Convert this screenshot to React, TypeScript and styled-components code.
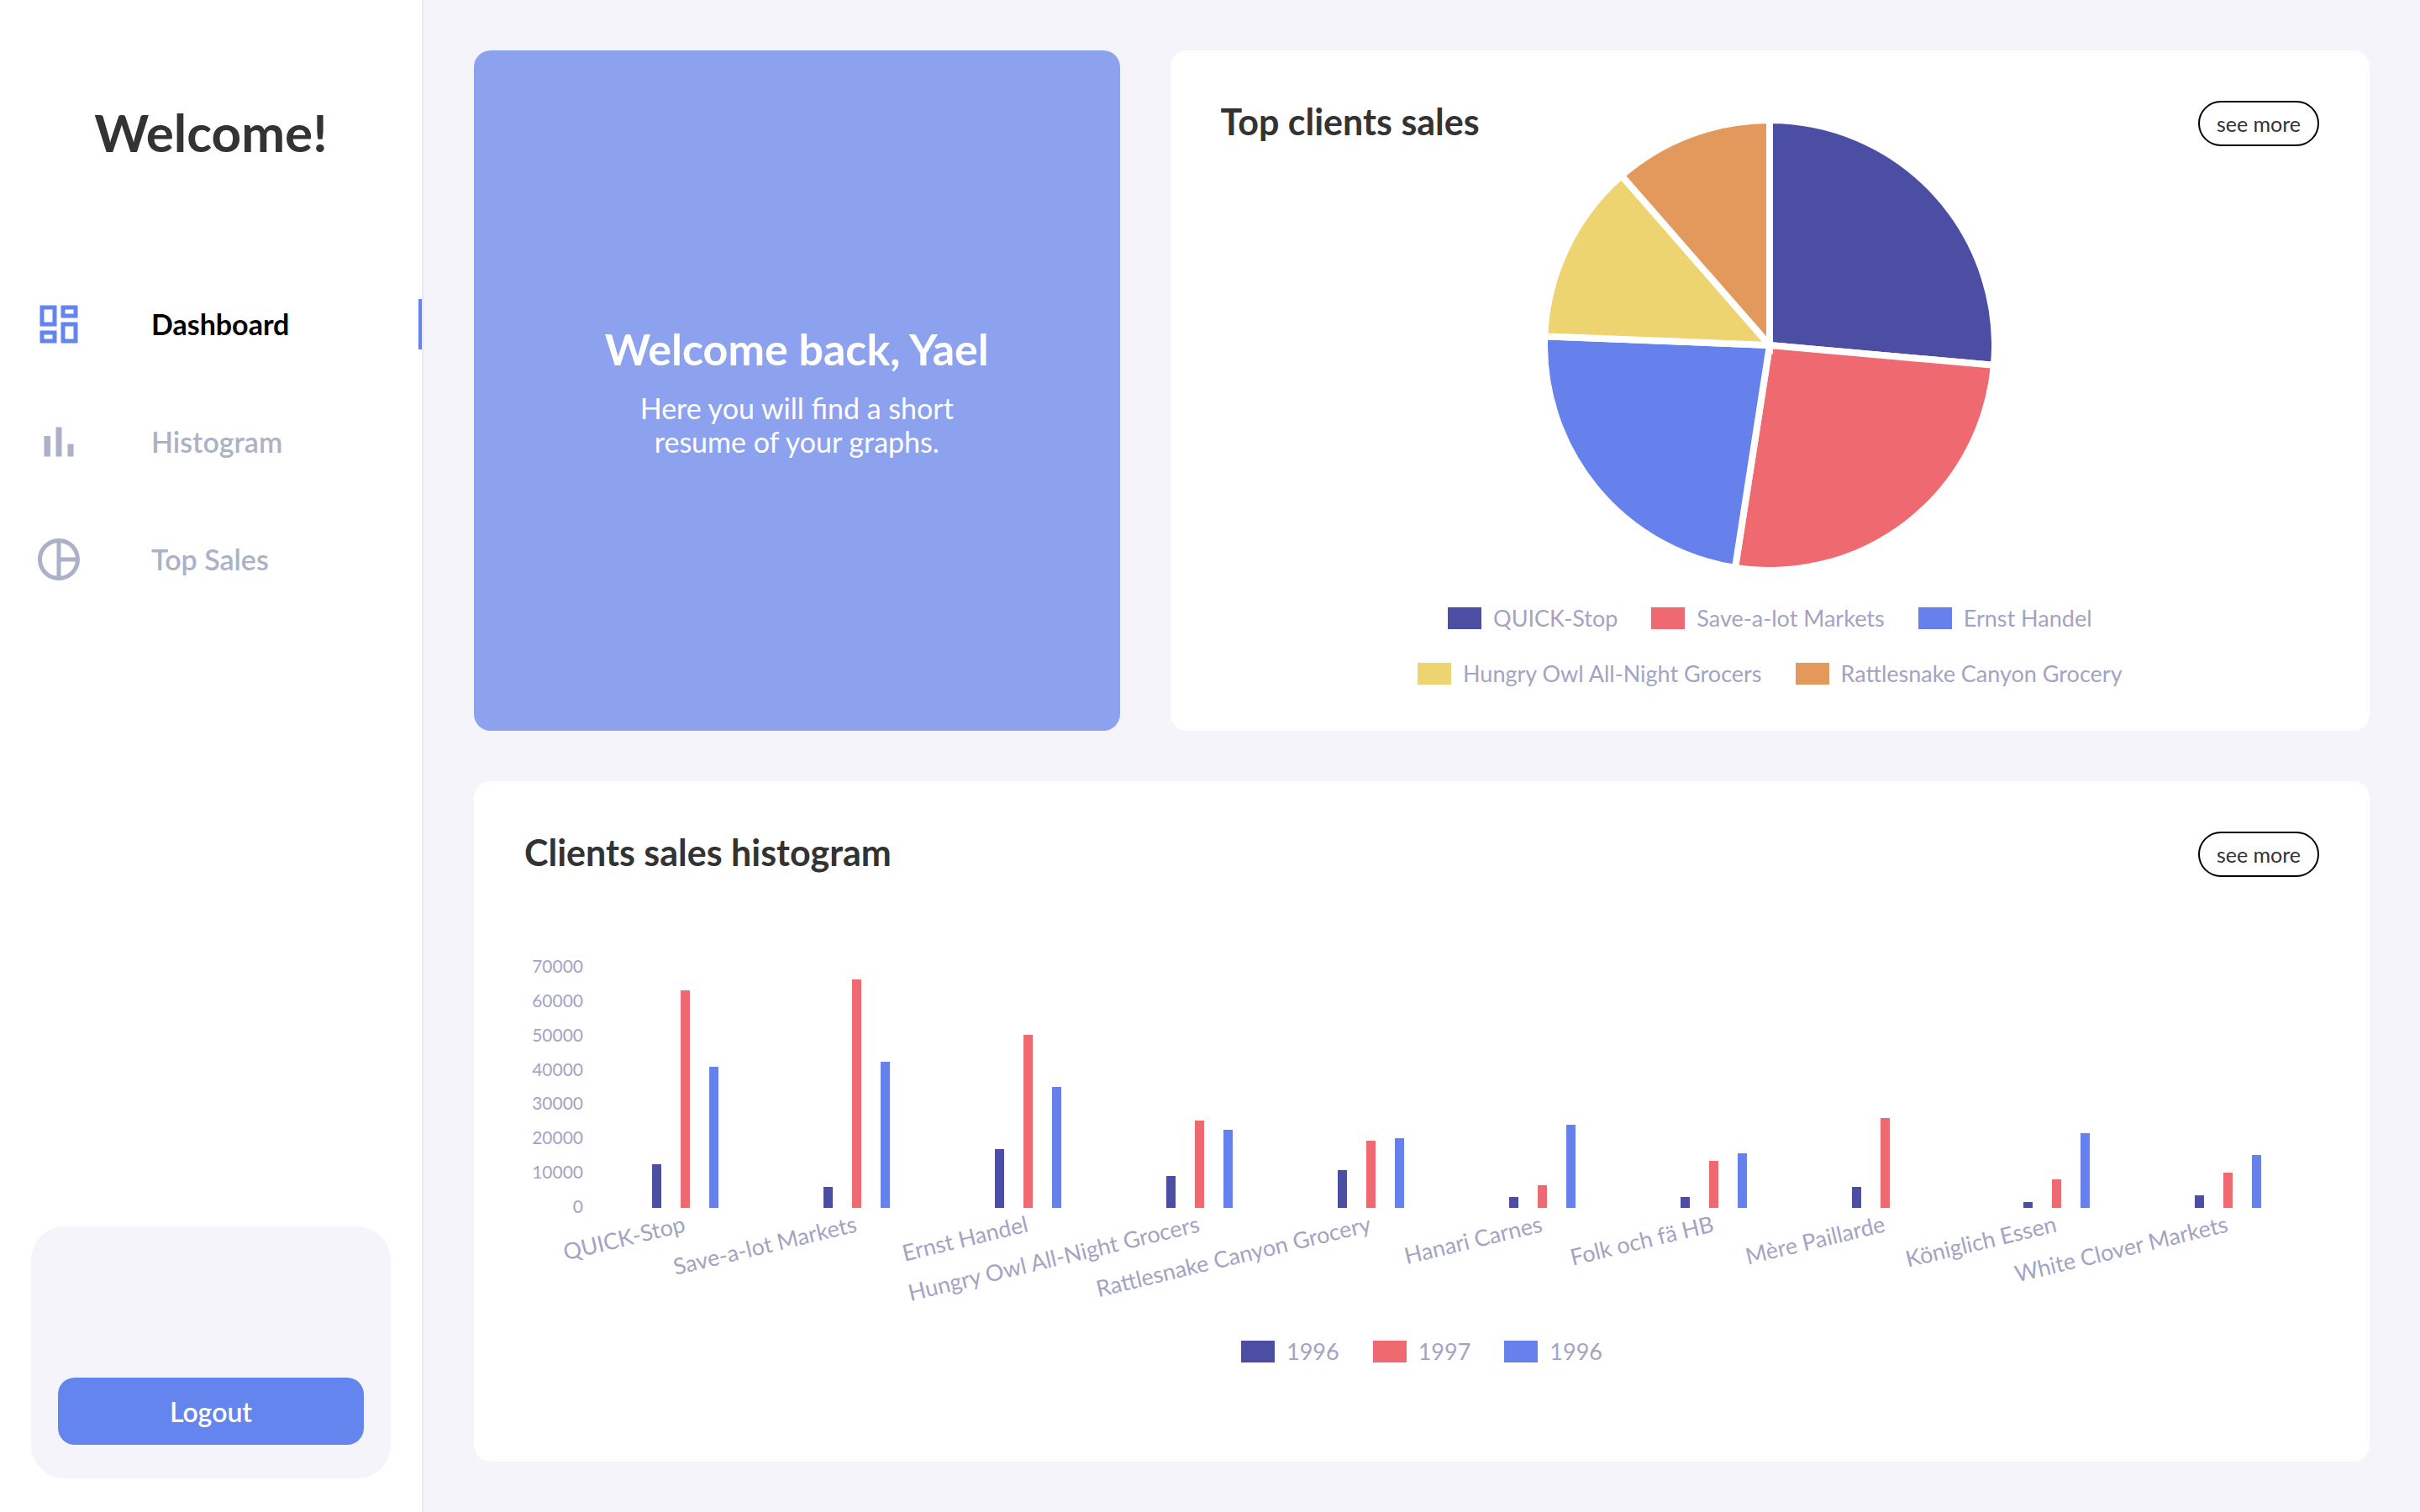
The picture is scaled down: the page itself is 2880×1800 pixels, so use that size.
import React from 'react';
import styled, { createGlobalStyle } from 'styled-components';

const colors = {
  page: '#f5f4fa',
  surface: '#ffffff',
  divider: '#e9e8f0',
  primary: '#6484ee',
  hero: '#8da2ef',
  heading: '#333333',
  navText: '#abb2c8',
  chartText: '#a3a3c4',
};

const palette = {
  indigo: '#4c4ea4',
  coral: '#ee6a70',
  blue: '#6681ec',
  yellow: '#eed371',
  orange: '#e2995b',
};

const GlobalStyle = createGlobalStyle`
  *, *::before, *::after { box-sizing: border-box; }
  body {
    margin: 0;
    background: ${colors.page};
    font-family: Lato, "Open Sans", sans-serif;
  }
  h1, h2, p, ul { margin: 0; padding: 0; }
  ul { list-style: none; }
`;

/* ---------- layout ---------- */

const Layout = styled.div`
  display: flex;
  min-height: 100vh;
`;

const Sidebar = styled.aside`
  display: flex;
  flex-direction: column;
  flex: 0 0 504px;
  padding: 120px 0 40px;
  background: ${colors.surface};
  border-right: 2px solid ${colors.divider};
`;

const Brand = styled.h1`
  color: ${colors.heading};
  font-size: 62px;
  font-weight: 700;
  line-height: 74px;
  text-align: center;
`;

const Nav = styled.nav`
  margin-top: 162px;
`;

const NavList = styled.ul`
  display: flex;
  flex-direction: column;
  gap: 80px;
`;

const NavLink = styled.a<{ $active?: boolean }>`
  display: flex;
  align-items: center;
  gap: 80px;
  height: 60px;
  padding-left: 40px;
  border-right: 4px solid ${p => (p.$active ? colors.primary : 'transparent')};
  color: ${p => (p.$active ? '#000000' : colors.navText)};
  font-size: 34px;
  font-weight: ${p => (p.$active ? 700 : 600)};
  line-height: 40px;
  text-decoration: none;

  svg {
    width: 60px;
    height: 60px;
    fill: ${p => (p.$active ? colors.primary : colors.navText)};
  }
`;

const AccountBox = styled.div`
  display: flex;
  flex-direction: column;
  justify-content: flex-end;
  height: 300px;
  margin: auto 37px 0;
  padding: 0 32px 40px;
  background: ${colors.page};
  border-radius: 40px;
`;

const LogoutButton = styled.button`
  height: 80px;
  border: 0;
  border-radius: 20px;
  background: ${colors.primary};
  color: #ffffff;
  font-family: inherit;
  font-size: 32px;
  font-weight: 600;
  cursor: pointer;
`;

const Main = styled.main`
  display: grid;
  flex: 1;
  grid-template-columns: 35fr 65fr;
  grid-template-rows: 1fr 1fr;
  gap: 60px;
  min-width: 0;
  padding: 60px;
`;

/* ---------- cards ---------- */

const HeroCard = styled.section`
  display: flex;
  flex-direction: column;
  align-items: center;
  justify-content: center;
  gap: 20px;
  border-radius: 20px;
  background: ${colors.hero};
  color: #ffffff;
  text-align: center;
`;

const HeroTitle = styled.h2`
  font-size: 52px;
  font-weight: 700;
  line-height: 62px;
`;

const HeroText = styled.p`
  max-width: 420px;
  font-size: 34px;
  font-weight: 400;
  line-height: 40px;
`;

const Card = styled.section<{ $wide?: boolean }>`
  display: grid;
  grid-column: ${p => (p.$wide ? '1 / -1' : 'auto')};
  align-items: start;
  align-content: start;
  min-width: 0;
  padding: 60px 60px 40px;
  border-radius: 20px;
  background: ${colors.surface};
`;

const CardHeader = styled.header`
  display: flex;
  grid-area: 1 / 1;
  align-items: flex-start;
  justify-content: space-between;
`;

const CardTitle = styled.h2`
  color: ${colors.heading};
  font-size: 43px;
  font-weight: 700;
  line-height: 50px;
`;

const SeeMore = styled.button`
  width: 144px;
  height: 54px;
  padding: 0;
  border: 2px solid #000000;
  border-radius: 27px;
  background: transparent;
  color: ${colors.heading};
  font-family: inherit;
  font-size: 25px;
  cursor: pointer;
`;

/* The pie shares the header's grid cell, the histogram sits in the row below it. */
const PieBody = styled.div`
  display: flex;
  grid-area: 1 / 1;
  flex-direction: column;
  align-items: center;
  gap: 48px;
  padding-top: 27px;
  pointer-events: none;
`;

const HistogramBody = styled.div`
  display: flex;
  flex-direction: column;
  align-items: center;
  gap: 36px;
  padding-top: 76px;
`;

const PieSvg = styled.svg`
  width: 528px;
  height: 528px;
`;

const BarSvg = styled.svg`
  width: 100%;
  height: auto;
  overflow: visible;
`;

const TickText = styled.text`
  fill: ${colors.chartText};
  font-size: 21px;
  text-anchor: end;
`;

const CategoryText = styled.text`
  fill: ${colors.chartText};
  font-size: 27px;
  text-anchor: end;
`;

const LegendList = styled.ul`
  display: flex;
  flex-wrap: wrap;
  justify-content: center;
  gap: 40px;
  max-width: 900px;
  color: ${colors.chartText};
  font-size: 27px;
  line-height: 26px;
`;

const LegendItem = styled.li`
  display: flex;
  align-items: center;
  gap: 14px;
`;

const Swatch = styled.span<{ $color: string }>`
  width: 40px;
  height: 26px;
  background: ${p => p.$color};
`;

/* ---------- data ---------- */

const topClients = [
  { name: 'QUICK-Stop', share: 95.1, color: palette.indigo },
  { name: 'Save-a-lot Markets', share: 93.7, color: palette.coral },
  { name: 'Ernst Handel', share: 83.5, color: palette.blue },
  { name: 'Hungry Owl All-Night Grocers', share: 46.6, color: palette.yellow },
  { name: 'Rattlesnake Canyon Grocery', share: 41.1, color: palette.orange },
];

const years = [
  { name: '1996', color: palette.indigo },
  { name: '1997', color: palette.coral },
  { name: '1996', color: palette.blue },
];

const clientSales: { name: string; sales: number[] }[] = [
  { name: 'QUICK-Stop', sales: [12700, 63400, 41200] },
  { name: 'Save-a-lot Markets', sales: [6200, 66600, 42700] },
  { name: 'Ernst Handel', sales: [17200, 50500, 35300] },
  { name: 'Hungry Owl All-Night Grocers', sales: [9200, 25400, 22800] },
  { name: 'Rattlesnake Canyon Grocery', sales: [10900, 19700, 20400] },
  { name: 'Hanari Carnes', sales: [3300, 6600, 24300] },
  { name: 'Folk och fä HB', sales: [3100, 13600, 16000] },
  { name: 'Mère Paillarde', sales: [6200, 26100, 0] },
  { name: 'Königlich Essen', sales: [1700, 8300, 21900] },
  { name: 'White Clover Markets', sales: [3600, 10400, 15400] },
];

/* ---------- charts ---------- */

function Legend({ items }: { items: { name: string; color: string }[] }) {
  return (
    <LegendList>
      {items.map((item, i) => (
        <LegendItem key={i}>
          <Swatch $color={item.color} />
          {item.name}
        </LegendItem>
      ))}
    </LegendList>
  );
}

const PIE_RADIUS = 268;

function pointOnPie(degrees: number) {
  const a = (degrees * Math.PI) / 180;
  return `${(PIE_RADIUS * Math.sin(a)).toFixed(2)} ${(-PIE_RADIUS * Math.cos(a)).toFixed(2)}`;
}

function PieChart() {
  let start = 0;
  return (
    <PieSvg viewBox="-264 -264 528 528" role="img" aria-label="Top clients sales">
      {topClients.map(({ name, share, color }) => {
        const end = start + share;
        const d = `M0 0 L${pointOnPie(start)} A${PIE_RADIUS} ${PIE_RADIUS} 0 0 1 ${pointOnPie(end)} Z`;
        start = end;
        return <path key={name} d={d} fill={color} stroke="#ffffff" strokeWidth="8" />;
      })}
    </PieSvg>
  );
}

const AXIS_MAX = 70000;
const AXIS_HEIGHT = 286;
const AXIS_BOTTOM = 318;
const AXIS_LEFT = 90;
const GROUP_WIDTH = 204;
const ticks = [70000, 60000, 50000, 40000, 30000, 20000, 10000, 0];
const barOffsets = [-40, -6, 28];

const scale = (value: number) => Math.round((value / AXIS_MAX) * AXIS_HEIGHT);

function BarChart() {
  return (
    <BarSvg viewBox="0 0 2136 440" role="img" aria-label="Clients sales histogram">
      {ticks.map(tick => (
        <TickText key={tick} x={70} y={AXIS_BOTTOM - scale(tick) + 6}>
          {tick}
        </TickText>
      ))}
      {clientSales.map(({ name, sales }, i) => {
        const center = AXIS_LEFT + GROUP_WIDTH * i + GROUP_WIDTH / 2;
        return (
          <g key={name}>
            {sales.map((value, n) => (
              <rect
                key={n}
                x={center + barOffsets[n]}
                y={AXIS_BOTTOM - scale(value)}
                width={11}
                height={scale(value)}
                fill={years[n].color}
              />
            ))}
            <CategoryText transform={`translate(${center + 1} 346) rotate(-13.5)`}>{name}</CategoryText>
          </g>
        );
      })}
    </BarSvg>
  );
}

/* ---------- icons ---------- */

const DashboardIcon = () => (
  <svg viewBox="0 0 24 24" aria-hidden="true">
    <path d="M19 5v2h-4V5h4M9 5v6H5V5h4m10 8v6h-4v-6h4M9 17v2H5v-2h4M21 3h-8v6h8V3zM11 3H3v10h8V3zm10 8h-8v10h8V11zm-10 4H3v6h8v-6z" />
  </svg>
);

const HistogramIcon = () => (
  <svg viewBox="0 0 24 24" aria-hidden="true">
    <path d="M5 9.2h3V19H5V9.2zM10.6 5h2.8v14h-2.8V5zm5.6 8H19v6h-2.8v-6z" />
  </svg>
);

const PieIcon = () => (
  <svg viewBox="0 0 24 24" aria-hidden="true">
    <path d="M12 2C6.48 2 2 6.48 2 12s4.48 10 10 10 10-4.48 10-10S17.52 2 12 2zm1 2.07c3.61.45 6.48 3.33 6.93 6.93H13V4.07zM4 12c0-4.06 3.07-7.44 7-7.93v15.87c-3.93-.5-7-3.88-7-7.94zm9 7.93V13h6.93c-.45 3.61-3.32 6.48-6.93 6.93z" />
  </svg>
);

const navItems = [
  { label: 'Dashboard', Icon: DashboardIcon, active: true },
  { label: 'Histogram', Icon: HistogramIcon, active: false },
  { label: 'Top Sales', Icon: PieIcon, active: false },
];

export default function App() {
  return (
    <>
      <GlobalStyle />
      <Layout>
        <Sidebar>
          <Brand>Welcome!</Brand>
          <Nav>
            <NavList>
              {navItems.map(({ label, Icon, active }) => (
                <li key={label}>
                  <NavLink href="#" $active={active} aria-current={active ? 'page' : undefined}>
                    <Icon />
                    {label}
                  </NavLink>
                </li>
              ))}
            </NavList>
          </Nav>
          <AccountBox>
            <LogoutButton type="button">Logout</LogoutButton>
          </AccountBox>
        </Sidebar>
        <Main>
          <HeroCard>
            <HeroTitle>Welcome back, Yael</HeroTitle>
            <HeroText>Here you will find a short resume of your graphs.</HeroText>
          </HeroCard>
          <Card>
            <CardHeader>
              <CardTitle>Top clients sales</CardTitle>
              <SeeMore type="button">see more</SeeMore>
            </CardHeader>
            <PieBody>
              <PieChart />
              <Legend items={topClients} />
            </PieBody>
          </Card>
          <Card $wide>
            <CardHeader>
              <CardTitle>Clients sales histogram</CardTitle>
              <SeeMore type="button">see more</SeeMore>
            </CardHeader>
            <HistogramBody>
              <BarChart />
              <Legend items={years} />
            </HistogramBody>
          </Card>
        </Main>
      </Layout>
    </>
  );
}
